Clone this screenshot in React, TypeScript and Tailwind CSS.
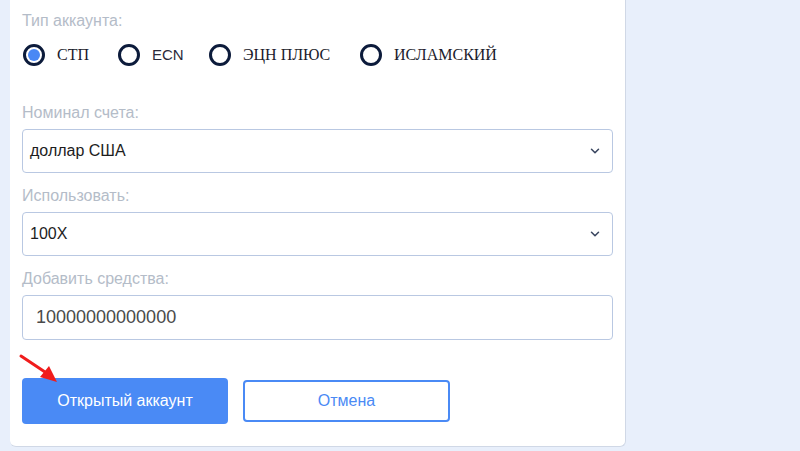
import { ChevronDown } from "lucide-react";

function Radio({ label, checked, sans }: { label: string; checked?: boolean; sans?: boolean }) {
  return (
    <label className="flex items-center gap-3">
      <span className="flex h-[22px] w-[22px] items-center justify-center rounded-full border-[3px] border-[#0c1b3b] bg-white">
        {checked && <span className="h-[12px] w-[12px] rounded-full bg-[#4a88f5]" />}
      </span>
      <span
        className={
          sans
            ? "font-['Liberation_Sans',Arial,sans-serif] text-[15px] text-[#2a2a3a]"
            : "font-['Liberation_Serif',serif] text-[16px] text-[#1c1c2c]"
        }
      >
        {label}
      </span>
    </label>
  );
}

function Label({ children }: { children: string }) {
  return <p className="mb-[7px] text-[16px] leading-[18px] text-[#b4bcc8]">{children}</p>;
}

function Select({ value }: { value: string }) {
  return (
    <div className="flex h-[44px] items-center justify-between rounded-[4px] border border-[#b9c8e2] pl-[7px] pr-[10px]">
      <span className="text-[16px] text-[#1d1d1d]">{value}</span>
      <ChevronDown size={14} strokeWidth={2.6} className="text-[#3a4660]" />
    </div>
  );
}

export default function App() {
  return (
    <div className="h-[451px] w-[800px] overflow-hidden bg-[#e8effb] font-['Liberation_Sans',Arial,sans-serif]">
      <div className="relative ml-[10px] w-[616px] rounded-b-[6px] border-r border-b border-[#d0d8e6] bg-white px-[12px] pt-[12px] pb-[22px]">
        <Label>Тип аккаунта:</Label>
        <div className="mt-[13px] flex items-center pl-[1px]">
          <div className="w-[95px]"><Radio label="СТП" checked /></div>
          <div className="w-[91px]"><Radio label="ECN" sans /></div>
          <div className="w-[151px]"><Radio label="ЭЦН ПЛЮС" /></div>
          <Radio label="ИСЛАМСКИЙ" />
        </div>

        <div className="mt-[37px]">
          <Label>Номинал счета:</Label>
          <Select value="доллар США" />
        </div>
        <div className="mt-[14px]">
          <Label>Использовать:</Label>
          <Select value="100X" />
        </div>
        <div className="mt-[14px]">
          <Label>Добавить средства:</Label>
          <div className="flex h-[45px] items-center rounded-[4px] border border-[#b9c8e2] pl-[13px]">
            <span className="text-[18px] text-[#4a4a4a]">10000000000000</span>
          </div>
        </div>

        <div className="mt-[38px] flex items-center gap-[15px]">
          <button className="h-[46px] w-[206px] rounded-[4px] bg-[#4a8af5] text-[16px] text-white">
            Открытый аккаунт
          </button>
          <button className="h-[42px] w-[207px] rounded-[4px] border-2 border-[#4a8af5] bg-white text-[16px] text-[#4a8af5]">
            Отмена
          </button>
        </div>

        <svg className="absolute left-[8px] top-[353px]" width="44" height="32" viewBox="0 0 44 32">
          <line x1="3" y1="3" x2="30" y2="21" stroke="#f01c1c" strokeWidth="3" strokeLinecap="round" />
          <polygon points="39,29 22,24 31,13" fill="#f01c1c" />
        </svg>
      </div>
    </div>
  );
}
